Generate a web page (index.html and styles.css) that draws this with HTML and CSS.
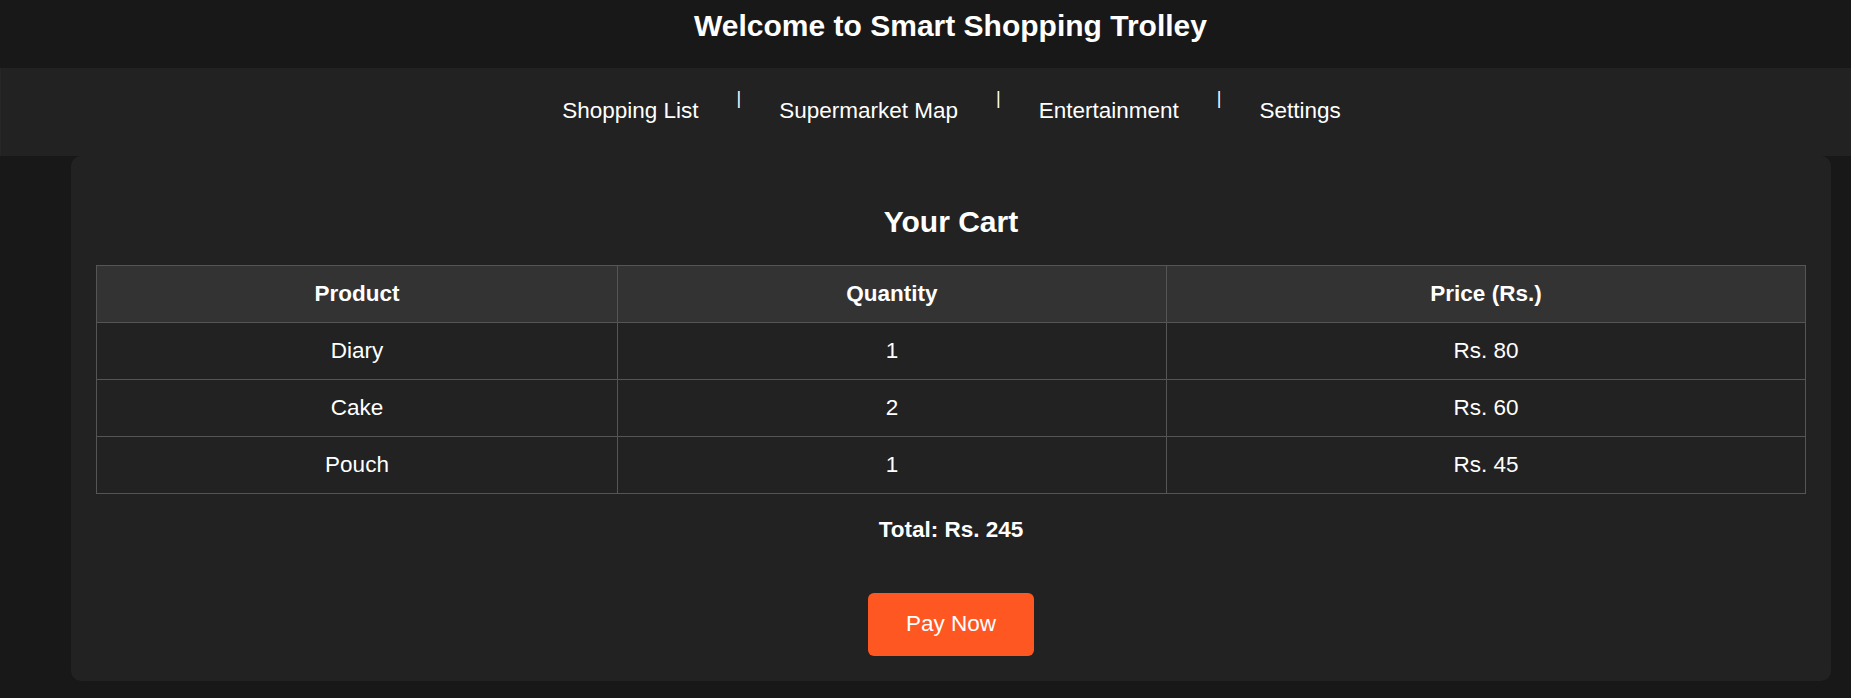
FILE: index.html
```html
<!DOCTYPE html>
<html lang="en">
<head>
<meta charset="utf-8">
<title>Smart Shopping Trolley</title>
<link rel="stylesheet" href="styles.css">
</head>
<body>
<header class="site-header">
  <h1 class="site-title">Welcome to Smart Shopping Trolley</h1>
</header>
<nav class="main-nav">
  <ul class="nav-list">
    <li class="nav-item"><a class="nav-link" href="#">Shopping List</a></li>
    <li class="nav-sep">|</li>
    <li class="nav-item"><a class="nav-link" href="#">Supermarket Map</a></li>
    <li class="nav-sep">|</li>
    <li class="nav-item"><a class="nav-link" href="#">Entertainment</a></li>
    <li class="nav-sep">|</li>
    <li class="nav-item"><a class="nav-link" href="#">Settings</a></li>
  </ul>
</nav>
<main class="cart-card">
  <h2 class="cart-title">Your Cart</h2>
  <table class="cart-table">
    <colgroup>
      <col class="col-product">
      <col class="col-qty">
      <col class="col-price">
    </colgroup>
    <thead>
      <tr><th>Product</th><th>Quantity</th><th>Price (Rs.)</th></tr>
    </thead>
    <tbody>
      <tr><td>Diary</td><td>1</td><td>Rs. 80</td></tr>
      <tr><td>Cake</td><td>2</td><td>Rs. 60</td></tr>
      <tr><td>Pouch</td><td>1</td><td>Rs. 45</td></tr>
    </tbody>
  </table>
  <p class="cart-total">Total: Rs. 245</p>
  <div class="pay-row">
    <button class="pay-btn" type="button">Pay Now</button>
  </div>
</main>
</body>
</html>
```
FILE: styles.css
```css
* { box-sizing: border-box; }

html, body {
  margin: 0;
  padding: 0;
}

body {
  background: #181818;
  color: #ffffff;
  font-family: "Liberation Sans", Arial, sans-serif;
  height: 698px;
  overflow: hidden;
}

.site-header {
  background: #181818;
  height: 68px;
  padding: 9px 0 0 50px;
  text-align: center;
}

.site-title {
  margin: 0;
  font-size: 30px;
  font-weight: bold;
  line-height: normal;
  color: #ffffff;
}

.main-nav {
  background: #222222;
  height: 88px;
  border-left: 1px solid #262626;
}

.nav-list {
  list-style: none;
  margin: 0;
  padding: 20px 0 0 51px;
  display: flex;
  justify-content: center;
  align-items: flex-start;
}

.nav-item {
  margin-top: 10px;
}

.nav-link {
  color: #ffffff;
  text-decoration: none;
  font-size: 22.5px;
  line-height: normal;
}

.nav-sep {
  font-size: 18px;
  line-height: normal;
  color: #ffffff;
  margin: 0 38px;
}

.cart-card {
  background: #222222;
  margin: 0 20px 0 71px;
  border-radius: 10px;
  padding: 25px;
}

.cart-title {
  margin: 24px 0 26px;
  font-size: 30px;
  font-weight: bold;
  line-height: normal;
  text-align: center;
}

.cart-table {
  width: 100%;
  border-collapse: collapse;
  table-layout: fixed;
  font-size: 22.5px;
}

.col-product { width: 521px; }
.col-qty { width: 549px; }

.cart-table th,
.cart-table td {
  border: 1px solid #555555;
  padding: 15px;
  text-align: center;
  line-height: normal;
}

.cart-table th {
  background: #333333;
  font-weight: bold;
}

.cart-total {
  margin: 22.5px 0 0;
  font-size: 22.5px;
  font-weight: bold;
  text-align: center;
  line-height: normal;
}

.pay-row {
  margin-top: 50px;
  display: flex;
  justify-content: center;
}

.pay-btn {
  background: #ff5722;
  color: #ffffff;
  border: none;
  border-radius: 6px;
  padding: 18.75px 37.5px;
  font-family: "Liberation Sans", Arial, sans-serif;
  font-size: 22.5px;
  line-height: normal;
  cursor: pointer;
}
```
